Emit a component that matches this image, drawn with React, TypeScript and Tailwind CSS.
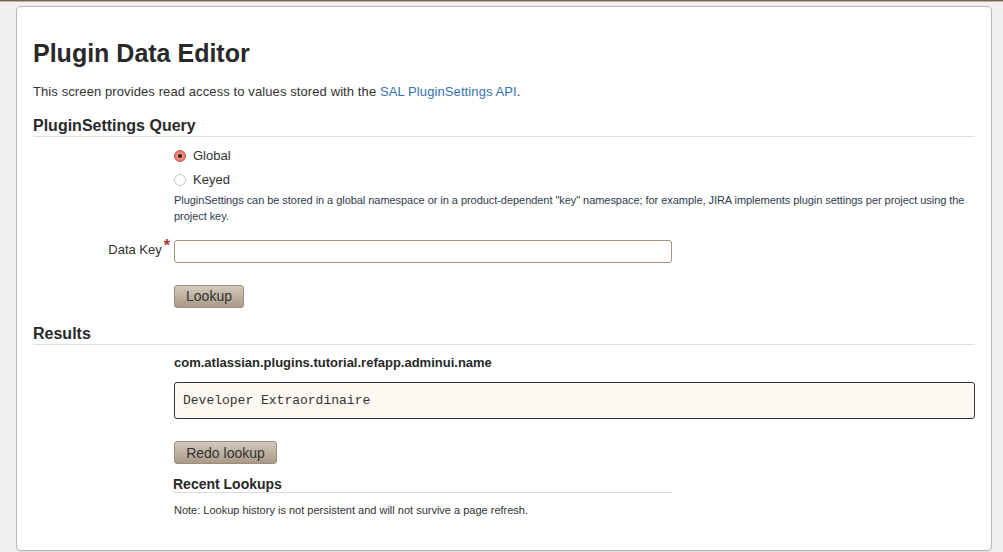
export default function App() {
  return (
    <div className="min-h-[552px] bg-[#f0f0f0] font-['Liberation_Sans',Arial,sans-serif] text-[#333]">
      <div className="h-px bg-[#6f6556]" />
      <div className="h-px bg-[#bcb4a8]" />
      <div className="pt-[4px] pl-[16px] pr-[11px]">
        <div className="rounded-[5px] border border-[#b8b8b8] bg-white px-[16px] pt-[31px] pb-[32px] shadow-[0_1px_1px_rgba(0,0,0,0.08)]">
          <h1 className="text-[25px] font-bold leading-[30px] text-[#292929]">Plugin Data Editor</h1>
          <p className="mt-[15px] text-[13px] leading-[18px] tracking-[0.1px]">
            This screen provides read access to values stored with the{" "}
            <a className="text-[#3572b0]">SAL PluginSettings API</a>.
          </p>

          <h2 className="mt-[15px] border-b border-[#dddddd] text-[16px] font-bold leading-[20px] text-[#292929]">
            PluginSettings Query
          </h2>

          <div className="ml-[141px] mt-[7px]">
            <div className="flex items-center h-[24px] text-[13px]">
              <span className="flex h-[12px] w-[12px] items-center justify-center rounded-full border border-[#c8554a] bg-[radial-gradient(circle,#f6a095,#e8685a)]">
                <span className="h-[4px] w-[4px] rounded-full bg-[#222]" />
              </span>
              <span className="ml-[7px]">Global</span>
            </div>
            <div className="flex items-center h-[24px] text-[13px]">
              <span className="h-[12px] w-[12px] rounded-full border border-[#cfc8bc] bg-white" />
              <span className="ml-[7px]">Keyed</span>
            </div>
            <p className="text-[11px] leading-[16px] tracking-[-0.05px] text-[#2e3b4c]">
              PluginSettings can be stored in a global namespace or in a product-dependent "key" namespace; for example, JIRA implements plugin settings per project using the project key.
            </p>
          </div>

          <div className="mt-[16px] flex items-center">
            <label className="flex w-[141px] items-start justify-end pr-[4px] text-[13px] leading-[18px] -mt-[3px]">
              Data Key
              <span className="relative top-[-1px] ml-[2px] text-[16px] font-bold leading-[12px] text-[#a8362b]">*</span>
            </label>
            <input className="h-[23px] w-[498px] rounded-[3px] border border-[#a8967e] bg-white outline-none" />
          </div>

          <div className="ml-[141px] mt-[21px]">
            <button className="h-[23px] w-[70px] rounded-[3px] border border-[#9d8d79] bg-[linear-gradient(#d3c9bc,#a99a88)] text-[14px] leading-[20px] text-[#333]">
              Lookup
            </button>
          </div>

          <h2 className="mt-[16px] border-b border-[#dddddd] text-[16px] font-bold leading-[20px] text-[#292929]">
            Results
          </h2>

          <div className="ml-[141px]">
            <div className="mt-[9px] text-[13px] font-bold leading-[18px] text-[#292929]">
              com.atlassian.plugins.tutorial.refapp.adminui.name
            </div>
            <div className="mt-[10px] flex h-[37px] items-center rounded-[3px] border border-[#333] bg-[#fdf9f2] pl-[8px] font-['Liberation_Mono',monospace] text-[13px] text-[#333]">
              Developer Extraordinaire
            </div>
            <button className="mt-[22px] h-[23px] w-[103px] rounded-[3px] border border-[#9d8d79] bg-[linear-gradient(#d3c9bc,#a99a88)] text-[14px] leading-[20px] text-[#333]">
              Redo lookup
            </button>
            <h3 className="mt-[11px] w-[499px] -ml-px border-b border-[#dddddd] text-[14px] font-bold leading-[16px] text-[#292929]">
              Recent Lookups
            </h3>
            <p className="mt-[9px] text-[11px] leading-[16px] text-[#333]">
              Note: Lookup history is not persistent and will not survive a page refresh.
            </p>
          </div>
        </div>
      </div>
    </div>
  );
}
